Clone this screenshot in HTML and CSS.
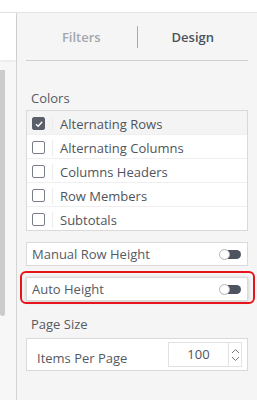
FILE: index.html
```html
<!DOCTYPE html>
<html lang="en">
<head>
  <meta charset="UTF-8">
  <title>Design</title>
  <link rel="stylesheet" href="styles.css">
</head>
<body>
  <div class="topbar"></div>
  <div class="main">
    <div class="side">
      <div class="side-head"></div>
      <div class="scroll-thumb"></div>
    </div>

    <div class="panel">
      <div class="tabs">
        <div class="tab">Filters</div>
        <div class="tab-sep"></div>
        <div class="tab active">Design</div>
      </div>

      <div class="section-label colors-label">Colors</div>
      <div class="check-list">
        <div class="check-row selected">
          <span class="check checked">
            <svg width="10" height="10" viewBox="0 0 10 10"><path d="M2 5.2 L4.2 7.3 L8.2 2.8" fill="none" stroke="#fff" stroke-width="1.4"/></svg>
          </span>
          <span class="check-text">Alternating Rows</span>
        </div>
        <div class="check-row">
          <span class="check"></span>
          <span class="check-text">Alternating Columns</span>
        </div>
        <div class="check-row">
          <span class="check"></span>
          <span class="check-text">Columns Headers</span>
        </div>
        <div class="check-row">
          <span class="check"></span>
          <span class="check-text">Row Members</span>
        </div>
        <div class="check-row">
          <span class="check"></span>
          <span class="check-text">Subtotals</span>
        </div>
      </div>

      <div class="toggle-box">
        <span>Manual Row Height</span>
        <span class="toggle"><span class="knob"></span></span>
      </div>

      <div class="toggle-box highlighted">
        <span>Auto Height</span>
        <span class="toggle"><span class="knob"></span></span>
      </div>

      <div class="section-label page-label">Page Size</div>
      <div class="page-box">
        <span class="page-text">Items Per Page</span>
        <div class="num-input">
          <span class="num-value">100</span>
          <span class="spinner">
            <svg width="9" height="18" viewBox="0 0 9 18"><path d="M1 7 L4.5 3.5 L8 7 M1 11 L4.5 14.5 L8 11" fill="none" stroke="#777" stroke-width="1"/></svg>
          </span>
        </div>
      </div>
    </div>
  </div>
</body>
</html>
```

FILE: styles.css
```css
body {
  margin: 0;
  width: 257px;
  height: 400px;
  overflow: hidden;
  background: #fff;
  font-family: 'Open Sans', 'Liberation Sans', Arial, sans-serif;
  font-size: 13px;
  color: #555a62;
}

.topbar {
  height: 12px;
  background: #fff;
  border-bottom: 1px solid #e4e4e4;
}

.main {
  display: flex;
  height: 387px;
}

.side {
  width: 16px;
  background: #f7f7f7;
  border-right: 1px solid #d4d4d4;
}

.side-head {
  height: 47px;
  background: #fff;
  box-shadow: 0 1px 3px rgba(0,0,0,0.08);
}

.scroll-thumb {
  margin-top: 10px;
  width: 5px;
  height: 246px;
  background: #cbcbcb;
  border-radius: 0 0 3px 3px;
}

.panel {
  flex: 1;
  background: #f5f5f5;
  padding: 0 9px;
}

.tabs {
  height: 47px;
  display: flex;
  align-items: center;
  border-bottom: 1px solid #cfcfcf;
}

.tab {
  flex: 1;
  text-align: center;
  font-size: 13px;
  font-weight: 600;
  color: #a3a7ae;
  padding-top: 1px;
}

.tab.active {
  color: #4c525d;
}

.tab-sep {
  width: 1px;
  height: 22px;
  background: #a9a9a9;
}

.section-label {
  font-size: 13px;
  line-height: 18px;
  color: #555a62;
  padding-left: 5px;
}

.colors-label {
  margin-top: 28px;
  margin-bottom: 3px;
}

.check-list {
  background: #fff;
  border: 1px solid #d9d9d9;
}

.check-row {
  height: 21px;
  padding-top: 2px;
  display: flex;
  align-items: center;
  border-bottom: 1px solid #efefef;
  padding-left: 5px;
}

.check-row:last-child {
  border-bottom: none;
}

.check-row.selected {
  background: #f4f4f4;
}

.check {
  width: 11px;
  height: 11px;
  border: 1.5px solid #7a7f88;
  border-radius: 2px;
  display: flex;
  align-items: center;
  justify-content: center;
  box-sizing: content-box;
}

.check.checked {
  background: #5a5f6b;
  border-color: #5a5f6b;
}

.check-text {
  margin-left: 7px;
  padding-left: 7px;
  border-left: 1px solid #ececec;
  line-height: 16px;
  color: #4f545c;
}

.toggle-box {
  position: relative;
  height: 22px;
  margin-top: 11px;
  background: #fff;
  border: 1px solid #dadada;
  display: flex;
  align-items: center;
  justify-content: space-between;
  padding: 0 6px 0 5px;
  color: #555a62;
}

.toggle-box.highlighted {
  box-shadow: 0 1px 4px rgba(0,0,0,0.18);
}

.toggle-box.highlighted::after {
  content: "";
  position: absolute;
  top: -7px;
  left: -7px;
  right: -8px;
  bottom: -4px;
  border: 2px solid #e8141b;
  border-radius: 6px;
}

.toggle {
  position: relative;
  width: 21px;
  height: 9px;
  background: #4e5360;
  border-radius: 5px;
}

.knob {
  position: absolute;
  left: -1px;
  top: -1px;
  width: 9px;
  height: 9px;
  background: #fff;
  border: 1px solid #b5b5b5;
  border-radius: 50%;
}

.page-label {
  margin-top: 14px;
  margin-bottom: 5px;
}

.page-box {
  height: 31px;
  background: #fff;
  border: 1px solid #d9d9d9;
  display: flex;
  align-items: center;
  justify-content: space-between;
  padding: 0 5px 0 10px;
}

.page-text {
  padding-top: 6px;
  color: #555a62;
}

.num-input {
  display: flex;
  height: 23px;
  border: 1px solid #e2e2e2;
}

.num-value {
  width: 59px;
  text-align: center;
  line-height: 22px;
  color: #4f545c;
}

.spinner {
  width: 12px;
  border-left: 1px solid #e2e2e2;
  display: flex;
  align-items: center;
  justify-content: center;
}
```
